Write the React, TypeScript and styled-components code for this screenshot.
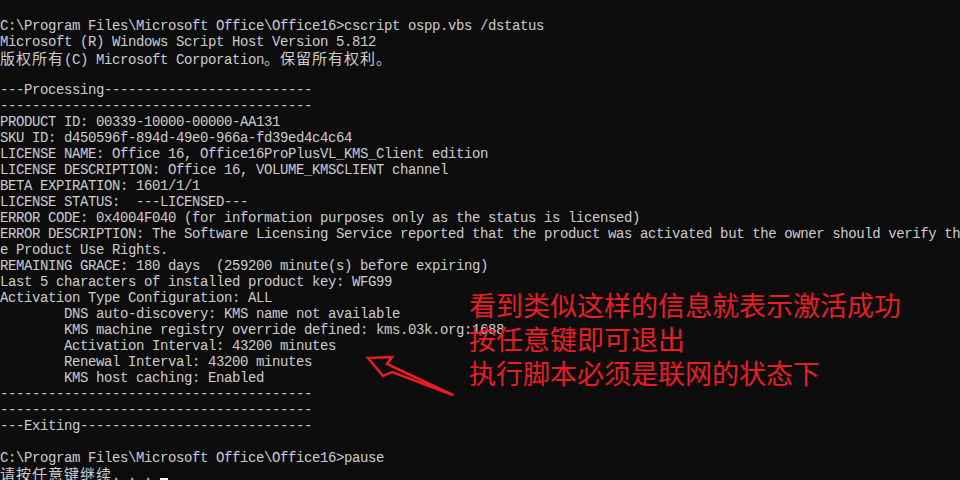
import React from "react";
import styled, { createGlobalStyle } from "styled-components";

const Global = createGlobalStyle`
  html, body { margin: 0; padding: 0; background: #0c0c0c; }
  body { width: 960px; height: 480px; overflow: hidden; }
`;

const Screen = styled.div`
  position: relative;
  width: 960px;
  height: 480px;
  background: #0c0c0c;
  overflow: hidden;
`;

const Console = styled.div`
  display: flex;
  flex-direction: column;
  padding-top: 18px;
  color: #cccccc;
  font-family: "Liberation Mono", "Noto Sans CJK SC", monospace;
  font-size: 14px;
  letter-spacing: -0.4px;
  line-height: 16px;
`;

const Line = styled.div`
  height: 16px;
  white-space: pre;
  overflow: visible;
`;

const Wide = styled.span`
  font-family: "Noto Sans CJK SC", sans-serif;
  font-size: 15px;
  letter-spacing: 1px;
  line-height: 16px;
`;

const Cursor = styled.span`
  display: inline-block;
  width: 8px;
  height: 4px;
  background: #f2f2f2;
  vertical-align: -2px;
`;

const Annotation = styled.div`
  position: absolute;
  left: 469px;
  top: 288px;
  display: flex;
  flex-direction: column;
  color: #e81d25;
  font-family: "Noto Sans CJK SC", sans-serif;
  font-size: 27px;
  line-height: 34px;
  white-space: nowrap;
`;

const Arrow = styled.svg`
  position: absolute;
  left: 0;
  top: 0;
  pointer-events: none;
`;

const I = "        ";
const DASH = "---------------------------------------";

const lines: React.ReactNode[] = [
  "C:\\Program Files\\Microsoft Office\\Office16>cscript ospp.vbs /dstatus",
  "Microsoft (R) Windows Script Host Version 5.812",
  <>
    <Wide>版权所有</Wide>(C) Microsoft Corporation<Wide>。保留所有权利。</Wide>
  </>,
  "",
  "---Processing--------------------------",
  DASH,
  "PRODUCT ID: 00339-10000-00000-AA131",
  "SKU ID: d450596f-894d-49e0-966a-fd39ed4c4c64",
  "LICENSE NAME: Office 16, Office16ProPlusVL_KMS_Client edition",
  "LICENSE DESCRIPTION: Office 16, VOLUME_KMSCLIENT channel",
  "BETA EXPIRATION: 1601/1/1",
  "LICENSE STATUS:  ---LICENSED---",
  "ERROR CODE: 0x4004F040 (for information purposes only as the status is licensed)",
  "ERROR DESCRIPTION: The Software Licensing Service reported that the product was activated but the owner should verify th",
  "e Product Use Rights.",
  "REMAINING GRACE: 180 days  (259200 minute(s) before expiring)",
  "Last 5 characters of installed product key: WFG99",
  "Activation Type Configuration: ALL",
  I + "DNS auto-discovery: KMS name not available",
  I + "KMS machine registry override defined: kms.03k.org:1688",
  I + "Activation Interval: 43200 minutes",
  I + "Renewal Interval: 43200 minutes",
  I + "KMS host caching: Enabled",
  DASH,
  DASH,
  "---Exiting-----------------------------",
  "",
  "C:\\Program Files\\Microsoft Office\\Office16>pause",
  <>
    <Wide>请按任意键继续</Wide>. . . <Cursor />
  </>,
];

export default function App() {
  return (
    <>
      <Global />
      <Screen>
        <Console>
          {lines.map((l, i) => (
            <Line key={i}>{l}</Line>
          ))}
        </Console>
        <Annotation>
          <span>看到类似这样的信息就表示激活成功</span>
          <span>按任意键即可退出</span>
          <span>执行脚本必须是联网的状态下</span>
        </Annotation>
        <Arrow width="960" height="480" viewBox="0 0 960 480">
          <polygon
            points="368,358 392,357 387,364 453,395 392,372 383,376"
            fill="none"
            stroke="#e81d25"
            strokeWidth="2.5"
            strokeLinejoin="miter"
          />
        </Arrow>
      </Screen>
    </>
  );
}
